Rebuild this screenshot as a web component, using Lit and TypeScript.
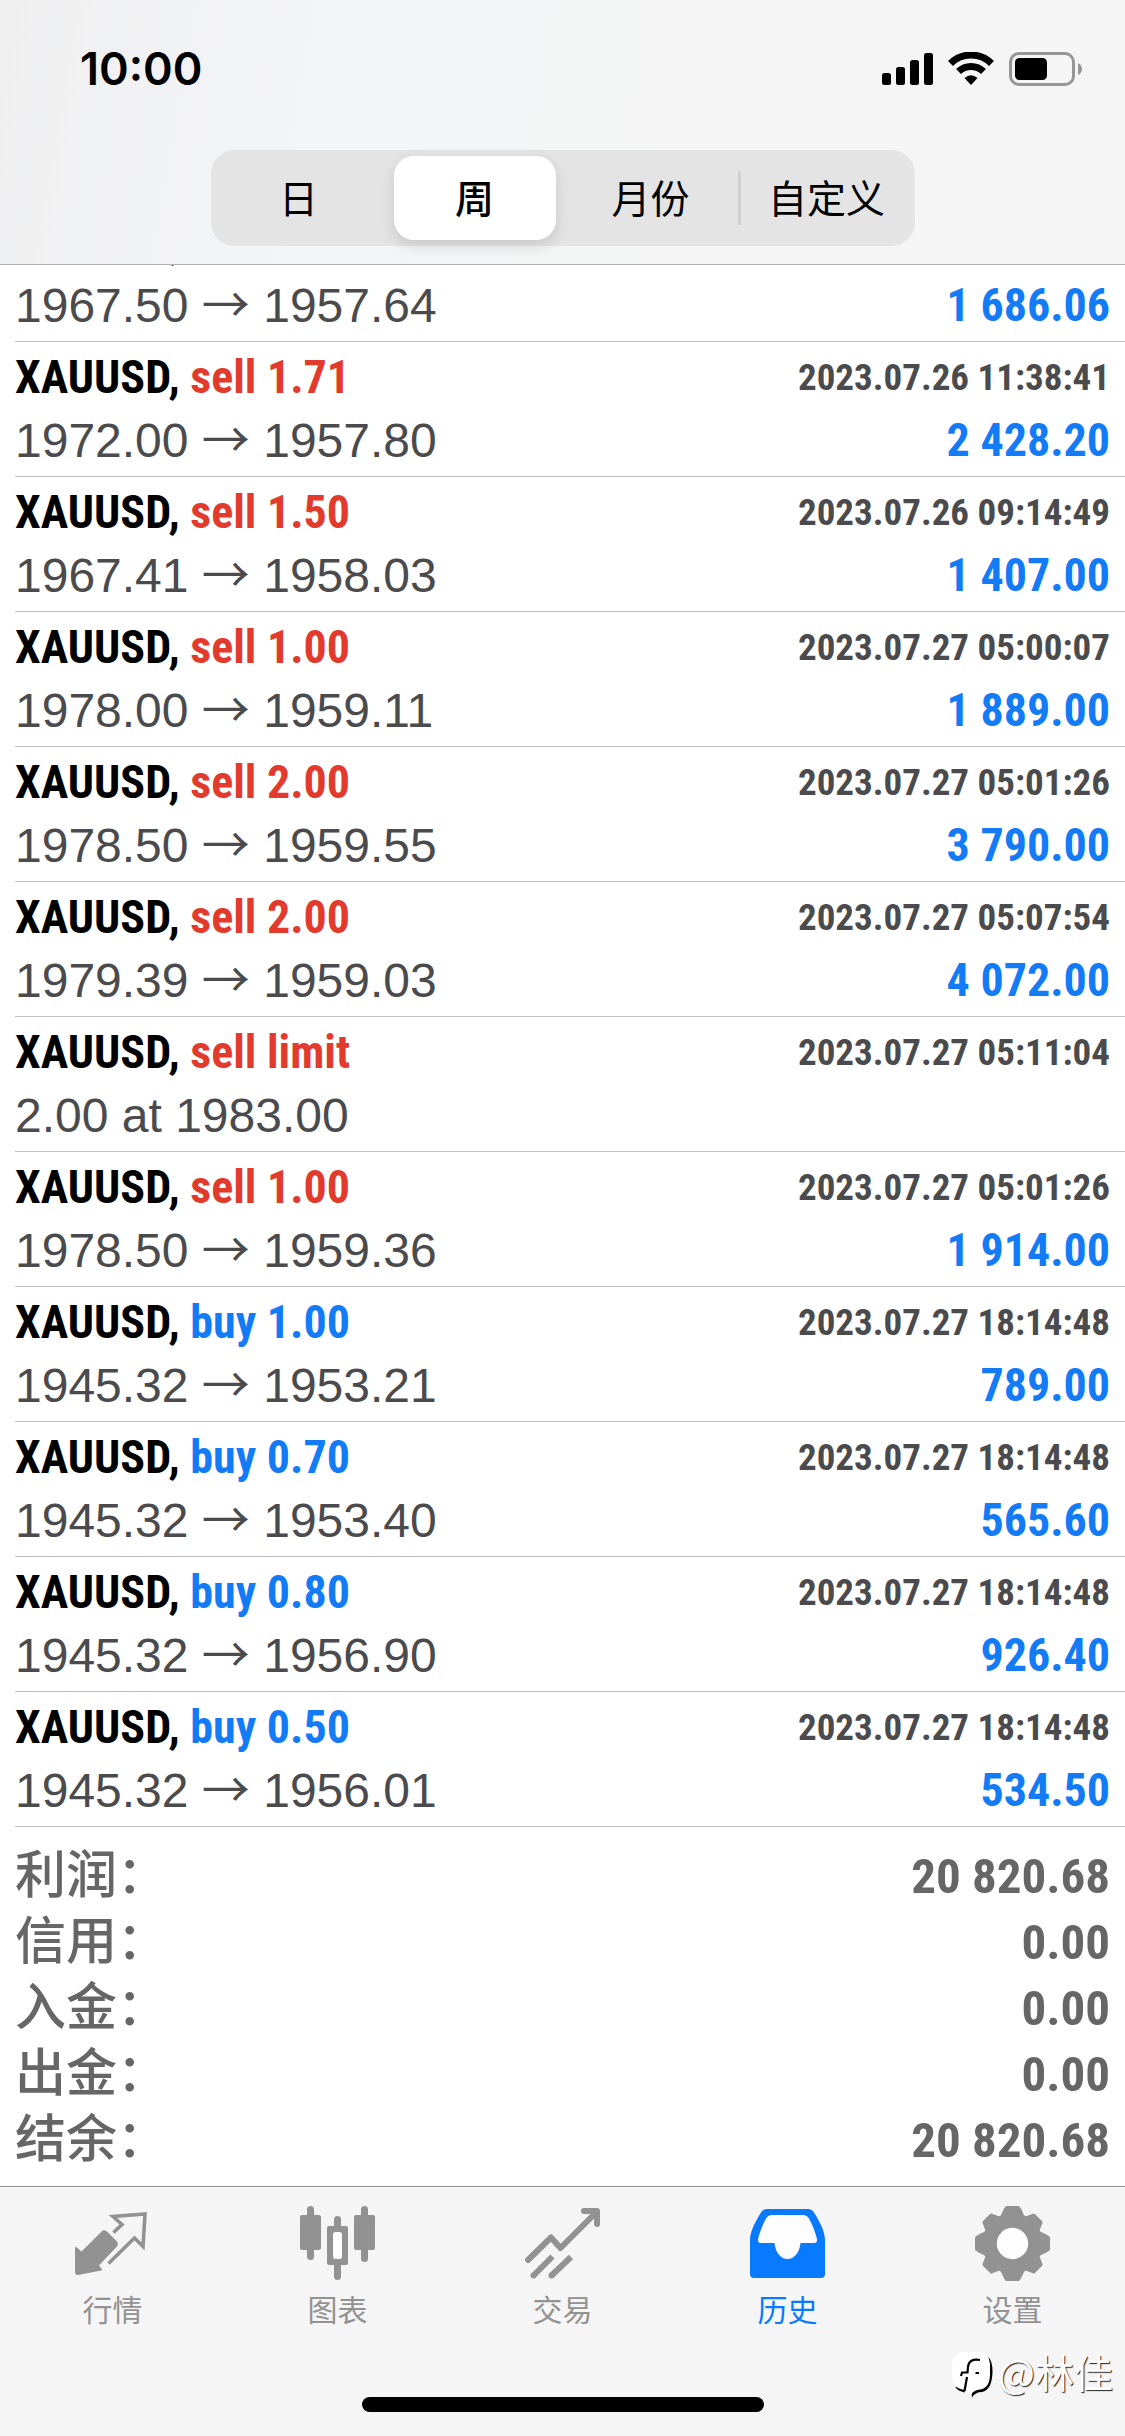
import { LitElement, html, css, svg, nothing } from "lit";
import { customElement, property, state } from "lit/decorators.js";

interface Deal {
  side?: "sell" | "buy";
  volume?: string;
  time?: string;
  open?: string;
  close?: string;
  note?: string;
  profit?: string;
}

const DEALS: Deal[] = [
  { open: "1967.50", close: "1957.64", profit: "1 686.06" },
  { side: "sell", volume: "1.71", time: "2023.07.26 11:38:41", open: "1972.00", close: "1957.80", profit: "2 428.20" },
  { side: "sell", volume: "1.50", time: "2023.07.26 09:14:49", open: "1967.41", close: "1958.03", profit: "1 407.00" },
  { side: "sell", volume: "1.00", time: "2023.07.27 05:00:07", open: "1978.00", close: "1959.11", profit: "1 889.00" },
  { side: "sell", volume: "2.00", time: "2023.07.27 05:01:26", open: "1978.50", close: "1959.55", profit: "3 790.00" },
  { side: "sell", volume: "2.00", time: "2023.07.27 05:07:54", open: "1979.39", close: "1959.03", profit: "4 072.00" },
  { side: "sell", volume: "limit", time: "2023.07.27 05:11:04", note: "2.00 at 1983.00" },
  { side: "sell", volume: "1.00", time: "2023.07.27 05:01:26", open: "1978.50", close: "1959.36", profit: "1 914.00" },
  { side: "buy", volume: "1.00", time: "2023.07.27 18:14:48", open: "1945.32", close: "1953.21", profit: "789.00" },
  { side: "buy", volume: "0.70", time: "2023.07.27 18:14:48", open: "1945.32", close: "1953.40", profit: "565.60" },
  { side: "buy", volume: "0.80", time: "2023.07.27 18:14:48", open: "1945.32", close: "1956.90", profit: "926.40" },
  { side: "buy", volume: "0.50", time: "2023.07.27 18:14:48", open: "1945.32", close: "1956.01", profit: "534.50" },
];

const TOTALS: [string, string][] = [
  ["利润：", "20 820.68"],
  ["信用：", "0.00"],
  ["入金：", "0.00"],
  ["出金：", "0.00"],
  ["结余：", "20 820.68"],
];

const PERIODS = ["日", "周", "月份", "自定义"];

const quotesIcon = svg`
  <path fill="currentColor" stroke="currentColor" stroke-width="2" stroke-linejoin="round"
    d="M1 42 L6.5 47 L27 26.500 Q29 24.500 31 26 L41.500 36.500 Q42.500 38 41.500 39.500 L22.500 59.500 L26 63.500 L3 68 Q1 68 1 66 Z"/>
  <path fill="none" stroke="currentColor" stroke-width="3.600" d="M38.500 26.500 L47 18.500 L38 10.500 L70 8 L68 40.500 L59.500 32 L33.500 57.500"/>`;

const chartIcon = svg`
  <g fill="currentColor">
    <rect x="7" y="0" width="7" height="54" rx="3.5"/>
    <rect x="0" y="9" width="21" height="35" rx="2"/>
    <rect x="61" y="0" width="7" height="56" rx="3.5"/>
    <rect x="54" y="9" width="21" height="35" rx="2"/>
    <rect x="34" y="10" width="7" height="64" rx="3.5"/>
    <rect x="27" y="20" width="21" height="39" rx="2"/>
  </g>
  <rect x="33" y="26" width="9" height="27" rx="2.5" fill="#fdfdfd"/>`;

const tradeIcon = svg`
  <g fill="none" stroke="currentColor" stroke-width="6" stroke-linejoin="round">
    <path stroke-linecap="round" d="M3 54 L26 31.500 L35.500 42 L72 5.500 M59 5 H72 V18"/>
    <path d="M8 70 L27.500 50.500 M26 70 L46 51"/>
  </g>
  <g fill="currentColor"><circle cx="8.5" cy="69.500" r="3"/><circle cx="26.500" cy="69.500" r="3"/></g>`;

const historyIcon = svg`
  <path fill="currentColor" d="M17 3 H58 Q62 3 64 6.500 C70 16 75 26 75 34 V68 Q75 72 71 72 H4 Q0 72 0 68 V34 C0 26 5 16 11 6.500 Q13 3 17 3 Z"/>
  <path fill="#fdfdfd" d="M22 9 H53 Q57 9 59 12.500 C62 18 65 25 67 33 Q67.500 37 64 37 H50.500 C49.500 47 44 53 37.500 53 C31 53 25.500 47 24.500 37 H11 Q7.500 37 8 33 C10 25 13 18 16 12.500 Q18 9 22 9 Z"/>`;

const settingsIcon = svg`
  <path fill="currentColor" stroke="currentColor" stroke-width="4" stroke-linejoin="round"
    d="M32 2 H43 C46 5 46 9 48 11 Q50 13 52 12 L58.500 9.500 L65.500 16.500 L63 23 Q62 25 64 27 C66 29 70 29 73 32 V43 C70 46 66 46 64 48 Q62 50 63 52 L65.500 58.500 L58.500 65.500 L52 63 Q50 62 48 64 C46 66 46 70 43 73 H32 C29 70 29 66 27 64 Q25 62 23 63 L16.500 65.500 L9.500 58.500 L12 52 Q13 50 11 48 C9 46 5 46 2 43 V32 C5 29 9 29 11 27 Q13 25 12 23 L9.500 16.500 L16.500 9.500 L23 12 Q25 13 27 11 C29 9 29 5 32 2 Z"/>
  <circle cx="37.500" cy="37.500" r="15.700" fill="#fdfdfd"/>`;

const TABS = [
  { label: "行情", icon: quotesIcon },
  { label: "图表", icon: chartIcon },
  { label: "交易", icon: tradeIcon },
  { label: "历史", icon: historyIcon },
  { label: "设置", icon: settingsIcon },
];

@customElement("status-bar")
class StatusBar extends LitElement {
  static styles = css`
    :host {
      display: flex;
      align-items: center;
      justify-content: space-between;
      padding: 44px 43px 0 80px;
      font: 600 45px/50px Inter, "Liberation Sans", sans-serif;
      color: #000;
    }
    .icons {
      display: block;
    }
  `;

  render() {
    return html`
      <span>10:00</span>
      <svg class="icons" width="201" height="34" viewBox="0 0 201 34" role="img" aria-label="信号、无线网络和电池">
        <rect x="1" y="21" width="9" height="12" rx="2.5"/>
        <rect x="15" y="15" width="9" height="18" rx="2.5"/>
        <rect x="29" y="8" width="9" height="25" rx="2.5"/>
        <rect x="43" y="1" width="9" height="32" rx="2.5"/>
        <g fill="none" stroke="#000" stroke-width="7">
          <path d="M69.500 11.500 A29 29 0 0 1 110.500 11.500"/>
          <path d="M77.500 19.500 A18 18 0 0 1 102.500 19.500"/>
        </g>
        <path d="M83.500 26 Q90 20.500 96.500 26 L91 32 Q90 33.500 89 32 Z"/>
        <rect x="129.500" y="1.500" width="63" height="31" rx="8.500" fill="none" stroke="#969696" stroke-width="3"/>
        <rect x="134" y="6" width="32" height="22" rx="4.500"/>
        <path fill="#969696" d="M197 11 Q201 13 201 17 Q201 21 197 23 Z"/>
      </svg>
    `;
  }
}

@customElement("period-picker")
class PeriodPicker extends LitElement {
  @state() private selected = 1;

  static styles = css`
    :host {
      display: block;
      width: 63%;
      max-width: 704px;
      margin: 0 auto;
    }
    .segments {
      display: grid;
      grid-template-columns: repeat(4, 1fr);
      box-sizing: border-box;
      height: 96px;
      padding: 6px 0;
      border-radius: 24px;
      background: #e4e4e5;
    }
    .segment {
      position: relative;
      border: 0;
      padding: 0 0 5px;
      margin: 0 7px;
      border-radius: 20px;
      background: none;
      color: #000;
      font: 400 39px/48px "Noto Sans CJK SC", sans-serif;
      white-space: nowrap;
    }
    .segment.selected {
      background: #fff;
      font-weight: 500;
      box-shadow: 0 6px 16px rgba(0, 0, 0, 0.12);
    }
    .segment.divided::before {
      content: "";
      position: absolute;
      left: -8px;
      top: 15px;
      bottom: 15px;
      width: 3px;
      border-radius: 2px;
      background: #cfcfd1;
    }
  `;

  render() {
    return html`<div class="segments" role="group">
      ${PERIODS.map(
        (name, i) => html`<button
          class="segment ${i === this.selected ? "selected" : ""} ${i > 0 && i !== this.selected && i - 1 !== this.selected ? "divided" : ""}"
          aria-pressed=${i === this.selected}
          @click=${() => (this.selected = i)}
        >${name}</button>`
      )}
    </div>`;
  }
}

@customElement("deal-row")
class DealRow extends LitElement {
  @property({ attribute: false }) deal!: Deal;

  static styles = css`
    :host {
      display: block;
      padding: 4px 15px 4px 0;
      border-bottom: 1px solid #c0c0c2;
      font: 400 48px/63px "Liberation Sans", Arial, sans-serif;
      color: #4b4b4d;
    }
    .line {
      display: flex;
      align-items: center;
      justify-content: space-between;
      height: 63px;
      white-space: nowrap;
    }
    .title,
    .time,
    .profit {
      font-family: "Roboto Condensed", "Arial Narrow", sans-serif;
      font-weight: 700;
    }
    .title {
      font-size: 46px;
      color: #000;
    }
    .sell {
      color: #e23b2e;
    }
    .buy {
      color: #147bf6;
    }
    .time {
      font-size: 37px;
    }
    .arrow {
      font-family: "Noto Sans CJK SC", sans-serif;
      line-height: 1;
    }
    .profit {
      font-size: 46px;
      color: #147bf6;
    }
  `;

  render() {
    const d = this.deal;
    return html`
      <div class="line">
        <span class="title">XAUUSD,${d.side ? html` <span class=${d.side}>${d.side} ${d.volume}</span>` : nothing}</span>
        ${d.time ? html`<time class="time">${d.time}</time>` : nothing}
      </div>
      <div class="line">
        <span>${d.note ?? html`${d.open} <span class="arrow">→</span> ${d.close}`}</span>
        ${d.profit ? html`<span class="profit">${d.profit}</span>` : nothing}
      </div>
    `;
  }
}

@customElement("tab-bar")
class TabBar extends LitElement {
  @state() private active = 3;

  static styles = css`
    :host {
      display: flex;
      flex-direction: column;
      flex: 1;
      position: relative;
      border-top: 1px solid #8e8e90;
      background: #f5f5f5;
    }
    .tabs {
      display: grid;
      grid-template-columns: repeat(5, 1fr);
      padding-top: 19px;
    }
    .tab {
      display: flex;
      flex-direction: column;
      align-items: center;
      gap: 9px;
      color: #929292;
      font: 400 30px/36px "Noto Sans CJK SC", sans-serif;
      text-decoration: none;
    }
    .tab.active {
      color: #087aff;
    }
    .icon {
      display: block;
      width: 75px;
      height: 75px;
    }
    .home {
      width: 402px;
      height: 15px;
      margin: auto auto 24px;
      border-radius: 8px;
      background: #000;
    }
    .mark {
      position: absolute;
      right: 12px;
      bottom: 38px;
      display: flex;
      align-items: flex-start;
      gap: 5px;
      color: #fff;
      font: 400 39px/38px "Noto Sans CJK SC", sans-serif;
      text-shadow: 1px 1px 1px #222;
    }
    .logo {
      display: block;
    }
  `;

  render() {
    return html`
      <nav class="tabs">
        ${TABS.map(
          (t, i) => html`<a
            class="tab ${i === this.active ? "active" : ""}"
            href="#tab-${i}"
            @click=${() => (this.active = i)}
          ><svg class="icon" viewBox="0 0 75 75" aria-hidden="true">${t.icon}</svg><span>${t.label}</span></a>`
        )}
      </nav>
      <div class="home"></div>
      <div class="mark">
        <svg class="logo" width="41" height="46" viewBox="0 0 41 46" aria-hidden="true">
          <path fill="#000" d="M36 5 Q40.500 8 40.500 20 Q40 38 30 40 Q23 40 20 45.500 L19.500 40 Z"/>
          <path fill="#000" d="M3 35 Q6 39 12.500 40.500 L13 36 Z"/>
          <path fill="#fff" d="M12 0 H28 Q37 1 38 12 V22 Q38 36 28 37.500 Q22 38 19.500 42 L13 38 Q1 37 0 24 V14 Q0 1 12 0 Z"/>
          <path fill="none" stroke="#000" stroke-width="2.200" d="M28 8 Q17 6 16 15 L15.500 20.500 H10 L9 24 M15 25 L12.500 39 M23.500 21 H27"/>
        </svg>
        <span>@林佳</span>
      </div>
    `;
  }
}

@customElement("app-root")
class AppRoot extends LitElement {
  static styles = css`
    :host {
      display: flex;
      flex-direction: column;
      min-height: 100vh;
      background: #fff;
    }
    .header {
      padding-bottom: 18px;
      border-bottom: 1px solid #b2b2b4;
      background: linear-gradient(100deg, #efeff0, #f4f5f7 30%, #f5f5f5 60%, #f6f5f5);
    }
    .picker {
      margin-top: 56px;
    }
    .viewport {
      overflow: hidden;
    }
    /* The list is scrolled so that its first row starts under the header. */
    .deals {
      list-style: none;
      margin: -58px 0 0;
      padding: 0 0 0 15px;
    }
    .totals {
      margin: 0;
      padding: 17px 15px 12px;
      color: #666;
    }
    .total {
      display: flex;
      justify-content: space-between;
      align-items: baseline;
      height: 66px;
    }
    .name {
      font: 500 51px/48px "Noto Sans CJK SC", sans-serif;
    }
    .value {
      margin: 0;
      font: 700 49px/66px "Roboto Condensed", "Arial Narrow", sans-serif;
    }
  `;

  render() {
    return html`
      <header class="header">
        <status-bar></status-bar>
        <period-picker class="picker"></period-picker>
      </header>
      <main class="viewport">
        <ul class="deals">
          ${DEALS.map((d) => html`<li><deal-row .deal=${d}></deal-row></li>`)}
        </ul>
        <dl class="totals">
          ${TOTALS.map(
            ([name, value]) => html`<div class="total"><dt class="name">${name}</dt><dd class="value">${value}</dd></div>`
          )}
        </dl>
      </main>
      <tab-bar></tab-bar>
    `;
  }
}
